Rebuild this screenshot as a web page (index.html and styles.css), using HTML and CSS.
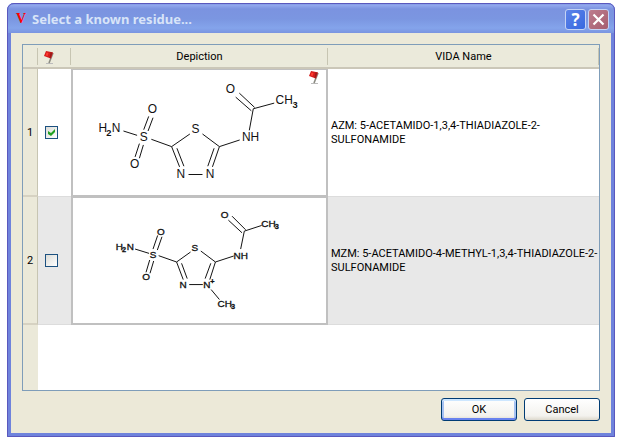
FILE: index.html
```
<!DOCTYPE html>
<html lang="en">
<head>
<meta charset="UTF-8">
<meta name="viewport" content="width=device-width, initial-scale=1.0">
<title>Select a known residue...</title>
<link rel="stylesheet" href="styles.css">
</head>
<body>
<svg class="defs" width="0" height="0" aria-hidden="true">
    <symbol id="flag" viewBox="0 0 12 14">
        <path d="M3 13.5h7" stroke="#bbb" stroke-width="1"/>
        <path d="M10 3L6 13" stroke="#8a8a80" stroke-width="1.600"/>
        <path d="M3 1l2.500.5 4.500 1-2 6-3-1-4-1.500z" fill="#d41c1c"/>
        <path d="M3.500 2.500l2 .5-.8 3-2-.5z" fill="#ff3b30"/>
        <path d="M7.500 2.200l2 .4-2 5.900-1-.6z" fill="#9c1a1a"/>
    </symbol>
</svg>
<div class="window">
    <header class="titlebar">
        <span class="logo">V</span>
        <h1>Select a known residue...</h1>
        <button class="tool help" aria-label="Help">?</button>
        <button class="tool close" aria-label="Close">
            <svg width="13" height="13" viewBox="0 0 13 13"><path d="M1.500 1.500l10 10M11.500 1.500l-10 10" stroke="#fff" stroke-width="2.200"/></svg>
        </button>
    </header>
    <main class="content">
        <div class="grid">
            <table>
                <colgroup>
                    <col class="col-num"><col class="col-check"><col class="col-pic"><col>
                </colgroup>
                <thead>
                    <tr>
                        <th></th>
                        <th class="flag-head"><svg class="flag" width="12" height="14" role="img" aria-label="Flag"><use href="#flag"/></svg></th>
                        <th>Depiction</th>
                        <th>VIDA Name</th>
                    </tr>
                </thead>
                <tbody>
                    <tr>
                        <th scope="row">1</th>
                        <td class="check"><input type="checkbox" aria-label="Select AZM" checked></td>
                        <td class="pic">
                            <svg class="molecule" viewBox="6 15 762 375">
                                <g class="bonds">
                                    <path d="M158 198L199 211M242 223L303 245M303 245L358 207M396 207L447 245M447 245L508 225M303 245L327 306M319 250L340 304M447 245L426 306M431 250L412 304M354 329H396"/>
                                    <path d="M219 194L234 154M232 198L247 158M206 236L193 276M218 240L206 280"/>
                                    <path d="M537 196L549 131M549 131L612 114M543 137L496 96M553 127L507 84"/>
                                </g>
                                <g class="atoms">
                                    <text x="96" y="202">H</text><text class="sub" x="114" y="212">2</text><text x="136" y="202">N</text>
                                    <text x="219" y="229">S</text>
                                    <text x="245" y="145">O</text>
                                    <text x="192" y="309">O</text>
                                    <text x="375" y="205">S</text>
                                    <text x="331" y="341">N</text>
                                    <text x="419" y="341">N</text>
                                    <text x="541" y="229">NH</text>
                                    <text x="480" y="85">O</text>
                                    <text x="642" y="118">CH</text><text class="sub" x="675" y="130">3</text>
                                </g>
                            </svg>
                            <svg class="flag marker" width="12" height="14" role="img" aria-label="Flagged"><use href="#flag"/></svg>
                        </td>
                        <td class="name">AZM: 5-ACETAMIDO-1,3,4-THIADIAZOLE-2-SULFONAMIDE</td>
                    </tr>
                    <tr>
                        <th scope="row">2</th>
                        <td class="check"><input type="checkbox" aria-label="Select MZM"></td>
                        <td class="pic">
                            <svg class="molecule small" viewBox="6 15 762 375">
                                <g class="bonds">
                                    <path d="M193 168L235 181M264 188L318 207M318 207L360 177M391 174L435 207M435 207L490 189M318 207L338 260M333 211L350 257M435 207L418 260M421 211L404 257M356 275H397"/>
                                    <path d="M247 168L261 127M260 171L274 131M237 201L226 238M249 204L238 241"/>
                                    <path d="M511 168L522 114M522 114L574 97M515 119L474 81M526 110L485 69M422 290L447 320"/>
                                </g>
                                <g class="atoms">
                                    <text x="146" y="172">H</text><text class="sub" x="160" y="178">2</text><text x="179" y="172">N</text>
                                    <text x="247" y="196">S</text>
                                    <text x="271" y="127">O</text>
                                    <text x="226" y="262">O</text>
                                    <text x="373" y="174">S</text>
                                    <text x="338" y="286">N</text>
                                    <text x="409" y="286">N</text><text class="sub" x="426" y="273">+</text>
                                    <text x="511" y="197">NH</text>
                                    <text x="463" y="76">O</text>
                                    <text x="595" y="103">CH</text><text class="sub" x="620" y="109">3</text>
                                    <text x="463" y="342">CH</text><text class="sub" x="488" y="349">3</text>
                                </g>
                            </svg>
                        </td>
                        <td class="name">MZM: 5-ACETAMIDO-4-METHYL-1,3,4-THIADIAZOLE-2-SULFONAMIDE</td>
                    </tr>
                </tbody>
            </table>
        </div>
        <div class="actions">
            <button class="btn default">OK</button>
            <button class="btn">Cancel</button>
        </div>
    </main>
</div>
</body>
</html>
```
FILE: styles.css
```
* {
    box-sizing: border-box;
}
body {
    margin: 0;
    padding: 3px 5px 4px 7px;
    min-height: 100vh;
    display: flex;
    background: #fff;
    color: #000;
    font-family: Roboto, "Noto Sans", sans-serif;
    font-size: 11px;
    line-height: 14px;
}
.defs {
    position: absolute;
}
.window {
    flex: 1;
    display: flex;
    flex-direction: column;
    border: solid #6f83dc;
    border-width: 0 4px 4px;
    border-radius: 7px 7px 0 0;
    background: #ece9d8;
    outline: 1px solid #5a58bd;
    outline-offset: -1px;
}
.titlebar {
    height: 30px;
    margin: 0 -4px;
    padding: 2px 6px 0 9px;
    display: flex;
    align-items: center;
    gap: 2px;
    border-radius: 7px 7px 0 0;
    background: linear-gradient(#6a80d6 0, #93a9ee 2px, #7b93e0 6px, #7b96e1 16px, #84a4eb 25px, #7a94e0 30px);
}
.logo {
    width: 14px;
    color: #f00;
    font: bold 14px/16px "Liberation Serif", serif;
}
h1 {
    flex: 1;
    margin: 0;
    color: #d8e4f8;
    font: bold 13px/18px "Noto Sans", sans-serif;
}
.tool {
    width: 21px;
    height: 21px;
    padding: 0;
    display: flex;
    align-items: center;
    justify-content: center;
    border: 1px solid #c5d3f5;
    border-radius: 3px;
    color: #fff;
    font: bold 17px/19px "Noto Sans", sans-serif;
}
.help {
    background: linear-gradient(135deg, #5d83e8, #3768e0);
}
.close {
    background: linear-gradient(135deg, #bd7c8d, #a65e70);
}
.content {
    flex: 1;
    display: flex;
    flex-direction: column;
    padding: 11px 11px 12px;
}
.grid {
    flex: 1;
    border: 1px solid #7f9db9;
    background: linear-gradient(to right, #ebe9d9 15px, #fff 15px);
}
table {
    width: 100%;
    table-layout: fixed;
    border-collapse: separate;
    border-spacing: 0;
}
.col-num {
    width: 15px;
}
.col-check {
    width: 33px;
}
.col-pic {
    width: 257px;
}
th, td {
    padding: 0;
    font-weight: normal;
}
thead th {
    height: 24px;
    padding-top: 2px;
    border-bottom: 2px solid #cbc7b8;
    background: linear-gradient(#c7c5b2, #c7c5b2) right 3px / 1px 17px no-repeat, #ebeadb;
}
.flag {
    display: block;
}
thead .flag-head {
    padding-left: 5px;
}
tbody th {
    padding-top: 2px;
    border-right: 1px solid #c7c5b2;
    border-bottom: 2px solid #d6d2c2;
    background: #ebe9d9;
}
tbody td {
    border-bottom: 1px solid #dcdcdc;
}
tbody tr:nth-child(2) td {
    background: #e8e8e8;
}
.check input {
    appearance: none;
    display: block;
    width: 13px;
    height: 13px;
    margin: 0 auto 0 7px;
    border: 1px solid #1c5180;
    background: linear-gradient(135deg, #dcdcd7, #fff);
}
.check input:checked::after {
    content: "";
    display: block;
    width: 7px;
    height: 7px;
    margin: 2px;
    background: #21a121;
    clip-path: polygon(0 28%, 43% 58%, 100% 0, 100% 42%, 43% 100%, 0 70%);
}
tbody .pic {
    position: relative;
    border: 1px solid #c0c0c0;
    border-width: 1px 2px 2px;
}
tbody tr:nth-child(2) .pic {
    background: #fff;
}
.molecule {
    display: block;
    width: 100%;
    height: 125px;
}
.bonds {
    fill: none;
    stroke: #111;
    stroke-width: 3;
}
.atoms {
    fill: #111;
    font-family: "Liberation Sans", sans-serif;
    font-size: 36px;
    text-anchor: middle;
}
.atoms .sub {
    font-size: 28px;
    font-weight: bold;
}
.small .atoms {
    stroke: #111;
    stroke-width: 1;
    font-size: 30px;
}
.small .sub {
    font-size: 22px;
}
.marker {
    position: absolute;
    top: 0;
    right: 6px;
}
.name {
    padding-left: 3px;
    text-align: left;
}
.actions {
    display: flex;
    justify-content: flex-end;
    gap: 7px;
    padding-top: 7px;
}
.btn {
    width: 76px;
    height: 23px;
    padding: 0;
    border: 1px solid #003c74;
    border-radius: 3px;
    background: linear-gradient(#fff, #f3f2ee 80%, #dcd8cc);
    color: #000;
    font: inherit;
}
.default {
    box-shadow: inset 0 2px #cee7ff, inset 0 -2px #6982ee, inset 2px 0 #a6c2f2, inset -2px 0 #a6c2f2;
}
```
